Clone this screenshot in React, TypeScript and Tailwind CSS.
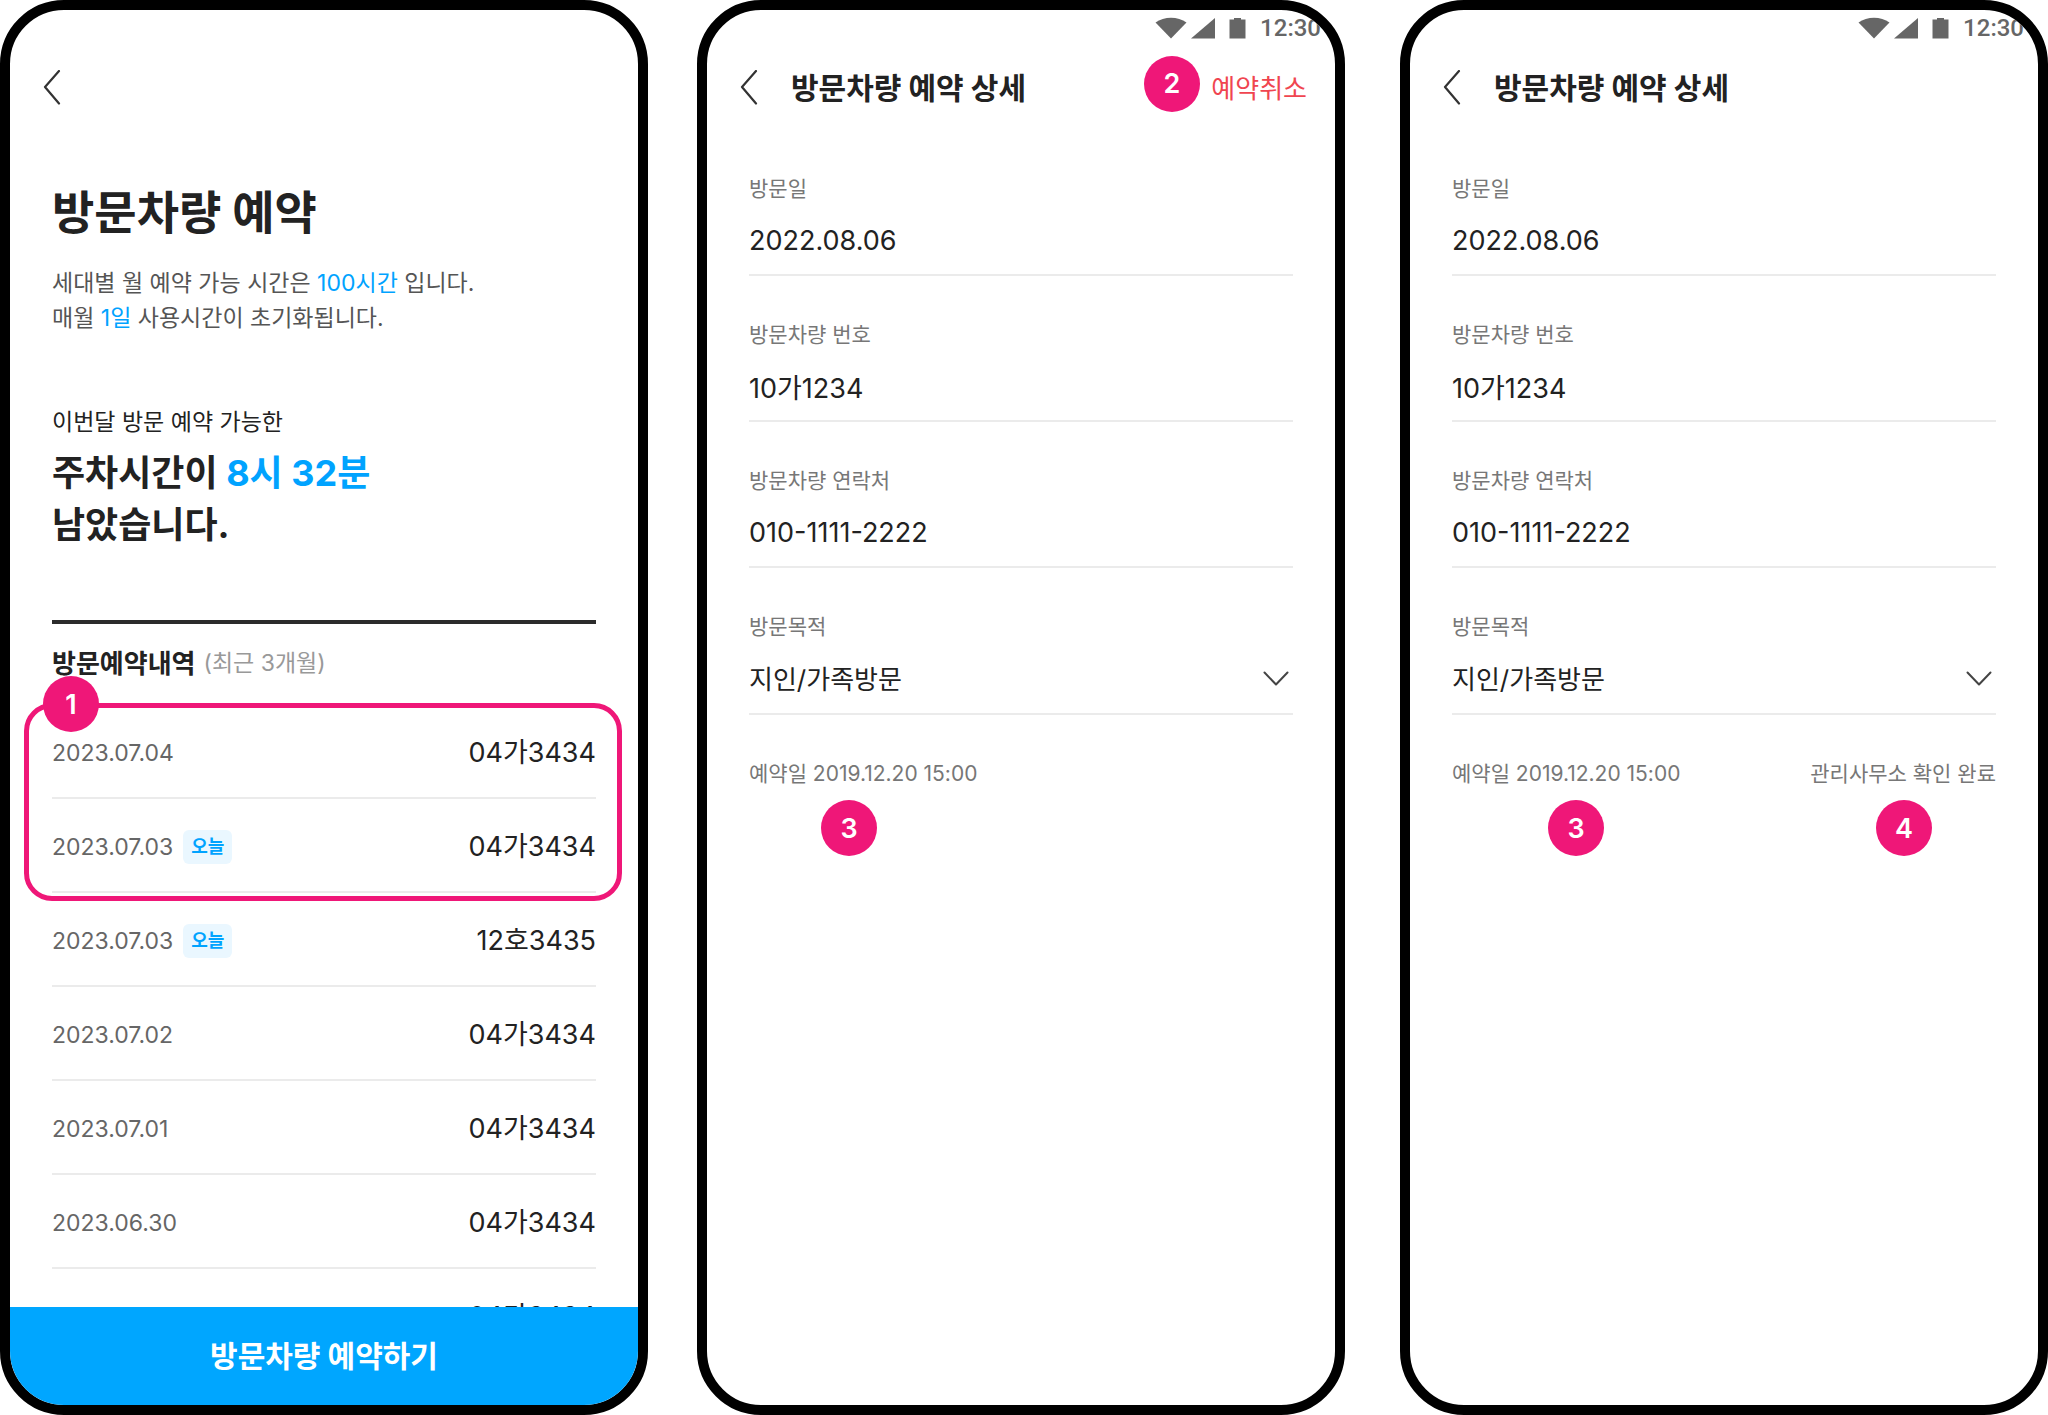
import React from "react";

const reservations = [
  { date: "2023.07.04", plate: "04가3434", today: false },
  { date: "2023.07.03", plate: "04가3434", today: true },
  { date: "2023.07.03", plate: "12호3435", today: true },
  { date: "2023.07.02", plate: "04가3434", today: false },
  { date: "2023.07.01", plate: "04가3434", today: false },
  { date: "2023.06.30", plate: "04가3434", today: false },
  { date: "", plate: "04가3434", today: false },
];

const details = [
  { key: "date", label: "방문일", value: "2022.08.06" },
  { key: "plate", label: "방문차량 번호", value: "10가1234" },
  { key: "phone", label: "방문차량 연락처", value: "010-1111-2222" },
];

function Phone({ children, className = "" }: { children: React.ReactNode; className?: string }) {
  return (
    <section
      className={`relative flex min-h-0 min-w-0 flex-1 flex-col overflow-hidden rounded-[64px] border-10 border-black bg-white ${className}`}
    >
      {children}
    </section>
  );
}

function Marker({ n, className }: { n: number; className: string }) {
  return (
    <span
      className={`absolute flex size-14 items-center justify-center rounded-full bg-[#ef1778] text-[27px] leading-none font-semibold text-white ${className}`}
    >
      {n}
    </span>
  );
}

function BackButton() {
  return (
    <button type="button" aria-label="뒤로" className="flex h-10 w-6 items-center">
      <svg width="20" height="36" viewBox="0 0 20 36" fill="none" stroke="#333" strokeWidth="2.2" strokeLinecap="round" strokeLinejoin="round">
        <path d="M17 1 3 17 17 33.500" />
      </svg>
    </button>
  );
}

function StatusBar() {
  return (
    <div className="flex h-9 items-center justify-end pr-3.5 text-[#666]">
      <svg width="32" height="22" viewBox="0 0 32 22" fill="currentColor">
        <path d="M16 21.500 0.500 5.500C9 -1 23 -1 31.500 5.500Z" />
      </svg>
      <svg className="ml-1" width="24" height="22" viewBox="0 0 24 22" fill="currentColor">
        <path d="M24 1V21.500H0Z" />
      </svg>
      <svg className="ml-3.5" width="17" height="22" viewBox="0 0 17 22" fill="currentColor">
        <path d="M5 1h7v1.500h4.500v19H0.500v-19H5Z" />
      </svg>
      <span className="ml-3.5 font-[Roboto] text-2xl leading-9 font-medium">12:30</span>
    </div>
  );
}

function ListScreen() {
  return (
    <Phone>
      <div className="min-h-0 flex-1 overflow-hidden px-[42px]">
        <div className="mt-9 -ml-2.5 flex h-[84px] items-center">
          <BackButton />
        </div>
        <h1 className="mt-[52px] text-[46px] leading-[60px] font-bold">방문차량 예약</h1>
        <p className="mt-6 text-[23px] leading-[35px] text-[#555]">
          세대별 월 예약 가능 시간은 <span className="text-[#00a3ff]">100시간</span> 입니다.
          <br />
          매월 <span className="text-[#00a3ff]">1일</span> 사용시간이 초기화됩니다.
        </p>
        <p className="mt-[69px] text-[23px] leading-[35px]">이번달 방문 예약 가능한</p>
        <p className="mt-[7px] text-4xl leading-[52px] font-bold">
          주차시간이 <span className="text-[#00a3ff]">8시 32분</span>
          <br />
          남았습니다.
        </p>
        <div className="mt-[69px] flex h-[85px] items-center gap-2 border-t-4 border-[#2b2b2b] pb-[3px]">
          <h2 className="text-[26px] font-bold">방문예약내역</h2>
          <span className="text-[23px] text-[#999]">(최근 3개월)</span>
        </div>
        <div className="relative">
          <ul>
            {reservations.map((r, i) => (
              <li key={i} className="flex h-[94px] items-center justify-between border-b-2 border-[#ebebeb] pt-1">
                <span className="flex items-center gap-2.5">
                  <time className="text-[23px] text-[#666]">{r.date}</time>
                  {r.today && (
                    <span className="rounded-md bg-[#eaf7ff] px-2 text-lg leading-[34px] font-bold text-[#00a3ff]">오늘</span>
                  )}
                </span>
                <span className="text-[27px] leading-9">{r.plate}</span>
              </li>
            ))}
          </ul>
          <div className="pointer-events-none absolute -top-0.5 -right-[26px] -left-7 h-[198px] rounded-[28px] border-5 border-[#ef1778]">
            <Marker n={1} className="-top-8 left-[14px]" />
          </div>
        </div>
      </div>
      <button type="button" className="h-[98px] w-full bg-[#00a6ff] text-[30px] font-bold text-white">
        방문차량 예약하기
      </button>
    </Phone>
  );
}

function DetailScreen({
  id,
  cancellable,
  confirmed,
  className,
}: {
  id: string;
  cancellable?: boolean;
  confirmed?: boolean;
  className?: string;
}) {
  return (
    <Phone className={className}>
      <StatusBar />
      <header className="flex h-[84px] items-center pr-7 pl-8">
        <BackButton />
        <h1 className="ml-7 text-[30px] font-bold">방문차량 예약 상세</h1>
        {cancellable && (
          <div className="relative ml-auto">
            <button type="button" className="text-[26px] text-[#f04550]">
              예약취소
            </button>
            <Marker n={2} className="-top-[13px] right-[107px]" />
          </div>
        )}
      </header>
      <form className="flex flex-col gap-[43px] px-[42px] pt-[43px]">
        {details.map((d) => (
          <div key={d.key} className="border-b-2 border-[#ebebeb] pb-2.5">
            <label htmlFor={`${id}-${d.key}`} className="block text-[21px] leading-8 text-[#777]">
              {d.label}
            </label>
            <input id={`${id}-${d.key}`} readOnly value={d.value} className="mt-[11px] block h-12 w-full text-[27px] outline-none" />
          </div>
        ))}
        <div className="border-b-2 border-[#ebebeb] pb-2.5">
          <label htmlFor={`${id}-purpose`} className="block text-[21px] leading-8 text-[#777]">
            방문목적
          </label>
          <div className="relative mt-3">
            <select id={`${id}-purpose`} className="block h-12 w-full appearance-none bg-transparent text-[26px] outline-none">
              <option>지인/가족방문</option>
            </select>
            <svg className="pointer-events-none absolute top-4 right-1" width="26" height="16" viewBox="0 0 26 16" fill="none" stroke="#444" strokeWidth="2" strokeLinecap="round" strokeLinejoin="round">
              <path d="M1.500 1.500 13 13.500 24.500 1.500" />
            </svg>
          </div>
        </div>
        <div className="relative flex justify-between text-[21px] leading-8 text-[#777]">
          <span>예약일 2019.12.20 15:00</span>
          {confirmed && <span>관리사무소 확인 완료</span>}
          <Marker n={3} className={confirmed ? "top-[42px] left-24" : "top-[42px] left-[72px]"} />
          {confirmed && <Marker n={4} className="top-[42px] right-16" />}
        </div>
      </form>
    </Phone>
  );
}

export default function App() {
  return (
    <main className="flex h-screen bg-white font-[Inter,'Noto_Sans_CJK_KR',sans-serif] text-[#222]">
      <ListScreen />
      <DetailScreen id="upcoming" cancellable className="mr-[55px] ml-[49px]" />
      <DetailScreen id="confirmed" confirmed />
    </main>
  );
}
